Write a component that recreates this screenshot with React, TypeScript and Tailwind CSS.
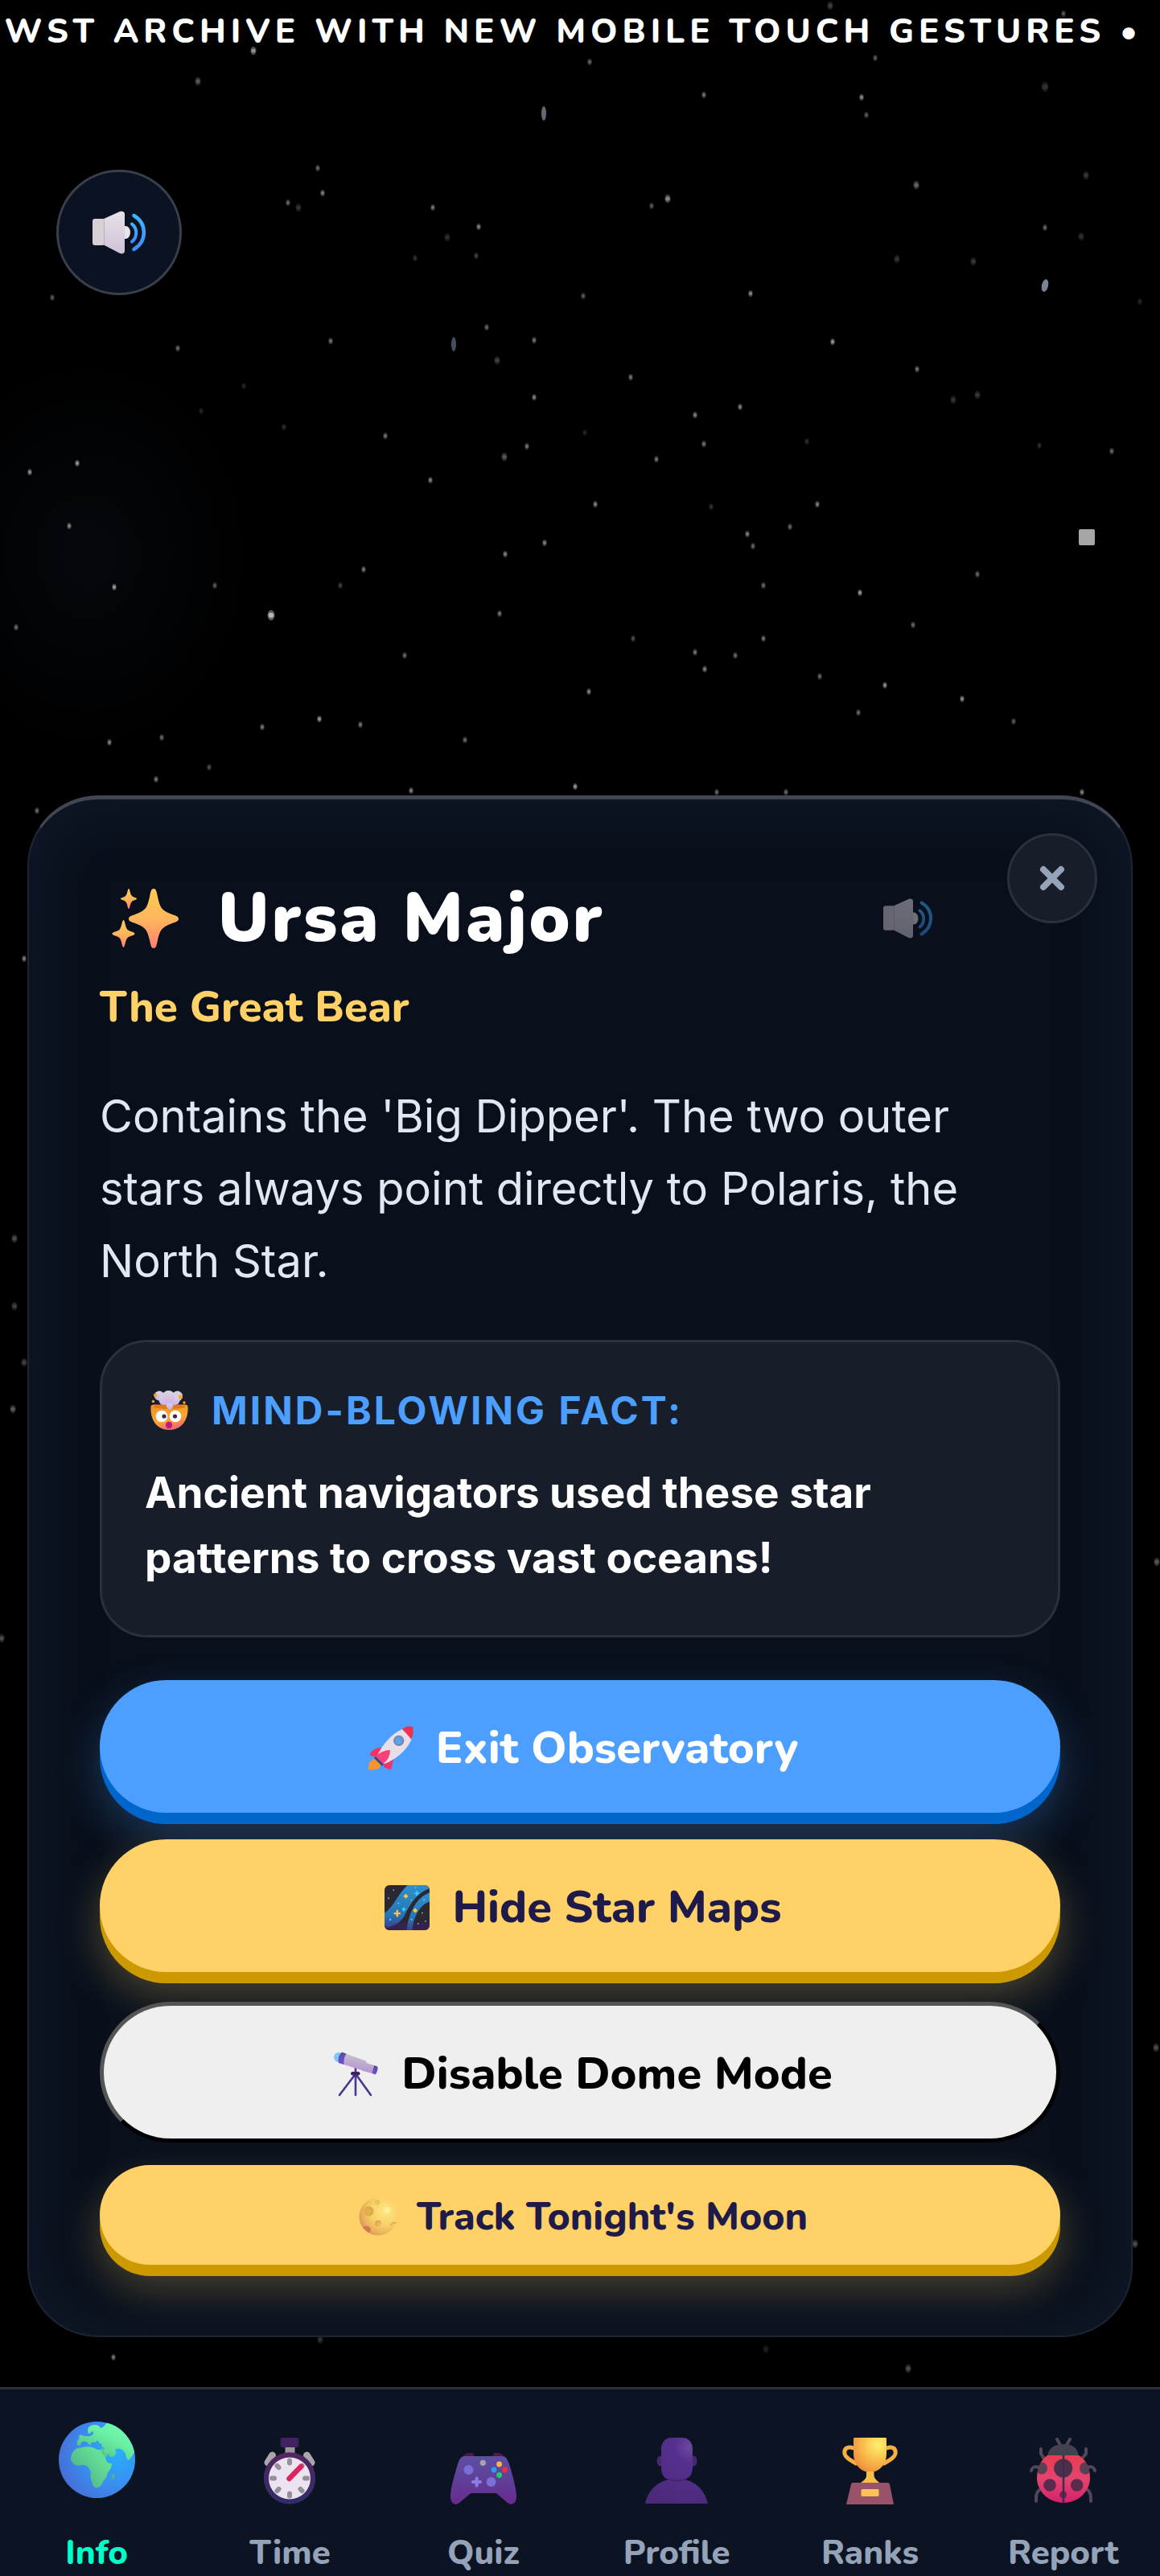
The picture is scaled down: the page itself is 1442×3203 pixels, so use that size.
import type { ReactNode } from "react";

// x, y, radius, opacity
const STARS: [number, number, number, number][] = [
  [315, 63, 4, 0.6], [246, 101, 4, 0.35], [733, 77, 3, 0.4], [875, 118, 3, 0.45], [1071, 121, 3, 0.55],
  [1077, 143, 3, 0.35], [1088, 72, 3, 0.35], [1032, 7, 4, 0.25], [1322, 17, 3, 0.35], [395, 209, 3, 0.4],
  [401, 240, 3, 0.5], [358, 252, 3, 0.4], [371, 258, 4, 0.2], [538, 258, 3, 0.45], [595, 282, 3, 0.5],
  [556, 295, 4, 0.18], [830, 247, 4, 0.55], [810, 256, 3, 0.35], [1139, 230, 4, 0.4], [1350, 218, 4, 0.22],
  [1299, 283, 3, 0.4], [1344, 294, 4, 0.18], [933, 365, 3, 0.55], [725, 368, 3, 0.35], [592, 318, 3, 0.25],
  [516, 321, 3, 0.2], [1115, 322, 4, 0.2], [1210, 325, 4, 0.22], [65, 370, 3, 0.35], [605, 407, 3, 0.4],
  [1417, 375, 3, 0.15], [1299, 108, 5, 0.2], [411, 424, 3, 0.45], [221, 433, 3, 0.4], [664, 423, 3, 0.45],
  [618, 448, 4, 0.25], [1035, 425, 3, 0.6], [784, 469, 3, 0.45], [1140, 459, 3, 0.45], [664, 494, 3, 0.5],
  [920, 506, 3, 0.5], [864, 516, 3, 0.5], [875, 552, 3, 0.45], [479, 542, 3, 0.45], [655, 555, 3, 0.45],
  [627, 568, 4, 0.35], [816, 571, 3, 0.45], [1382, 561, 3, 0.4], [96, 576, 3, 0.6], [37, 587, 3, 0.55],
  [535, 597, 3, 0.5], [740, 627, 3, 0.5], [1016, 627, 3, 0.5], [884, 630, 3, 0.2], [86, 654, 3, 0.5],
  [982, 655, 3, 0.4], [929, 664, 3, 0.5], [936, 679, 3, 0.4], [677, 675, 3, 0.5], [628, 689, 3, 0.5],
  [452, 708, 3, 0.45], [267, 728, 3, 0.35], [142, 730, 3, 0.6], [423, 728, 3, 0.25], [1215, 714, 3, 0.4],
  [949, 728, 3, 0.4], [1069, 737, 3, 0.6], [337, 765, 5, 0.75], [621, 763, 3, 0.45], [20, 780, 3, 0.4],
  [1135, 777, 3, 0.4], [949, 794, 3, 0.45], [787, 794, 3, 0.3], [503, 815, 3, 0.4], [864, 811, 3, 0.45],
  [914, 815, 3, 0.4], [876, 832, 3, 0.5], [1019, 841, 3, 0.4], [1100, 852, 3, 0.55], [732, 860, 3, 0.5],
  [1196, 869, 3, 0.55], [1067, 886, 3, 0.4], [1260, 897, 3, 0.35], [397, 894, 3, 0.6], [326, 904, 3, 0.45],
  [448, 901, 3, 0.45], [201, 917, 3, 0.4], [136, 923, 3, 0.5], [578, 920, 3, 0.4], [260, 954, 3, 0.3],
  [194, 969, 3, 0.45], [715, 978, 3, 0.6], [511, 983, 3, 0.5], [891, 985, 3, 0.4], [977, 985, 3, 0.4],
  [1345, 985, 3, 0.5], [46, 1008, 3, 0.4], [30, 1192, 3, 0.5], [18, 1540, 4, 0.3], [18, 1624, 4, 0.25],
  [30, 1694, 4, 0.25], [16, 1752, 4, 0.35], [1438, 1942, 4, 0.35], [2, 2037, 4, 0.3], [1437, 2546, 4, 0.3],
  [1411, 2790, 4, 0.3], [141, 2931, 3, 0.45], [398, 2909, 4, 0.2], [1129, 2945, 4, 0.3], [952, 2921, 4, 0.12],
  [303, 480, 3, 0.15], [250, 511, 3, 0.15], [353, 531, 3, 0.18], [727, 538, 3, 0.15], [1185, 497, 4, 0.2],
  [1215, 491, 4, 0.22], [1292, 554, 3, 0.18], [1003, 549, 3, 0.18],
];

function StarField() {
  return (
    <svg
      className="pointer-events-none absolute inset-0 h-full w-full"
      viewBox="0 0 1442 3203"
      preserveAspectRatio="xMidYMin slice"
      aria-hidden="true"
    >
      <defs>
        <radialGradient id="haze">
          <stop offset="0" stopColor="#0a121c" stopOpacity="0.45" />
          <stop offset="1" stopColor="#0a121c" stopOpacity="0" />
        </radialGradient>
      </defs>
      <ellipse cx="110" cy="690" rx="190" ry="230" fill="url(#haze)" />
      {STARS.map(([x, y, r, o]) => (
        <g key={`${x}-${y}`} fill="#f4f1ee" opacity={o}>
          <ellipse cx={x} cy={y} rx={r * 0.9} ry={r * 1.3} opacity="0.5" />
          <circle cx={x} cy={y} r={r * 0.65} />
        </g>
      ))}
      <ellipse cx="676" cy="141" rx="3" ry="9" fill="#8a94a8" opacity="0.7" />
      <ellipse cx="564" cy="428" rx="3" ry="9" fill="#5f6f88" opacity="0.7" />
      <ellipse cx="1299" cy="355" rx="4" ry="8" fill="#a9bdd6" opacity="0.7" transform="rotate(12 1299 355)" />
      <rect x="1341" y="658" width="20" height="20" rx="2" fill="#a6a6a6" />
    </svg>
  );
}

function SpeakerIcon({ className }: { className: string }) {
  return (
    <svg className={className} viewBox="6 13 67 54" aria-hidden="true">
      <defs>
        <linearGradient id="spk-cone" x1="0" x2="0" y1="0" y2="1">
          <stop offset="0" stopColor="#e6e1e6" />
          <stop offset="1" stopColor="#cfc3d8" />
        </linearGradient>
        <linearGradient id="spk-wave" x1="0" x2="0" y1="0" y2="1">
          <stop offset="0" stopColor="#3fb5ff" />
          <stop offset="1" stopColor="#3f8cf5" />
        </linearGradient>
      </defs>
      <ellipse cx="47" cy="40" rx="6" ry="8" fill="#e9e4ea" />
      <path d="M19 23.500 L40 14 C43 13 46 14 46 17 V63 C46 66 43 67 40 66 L19 55 Z" fill="url(#spk-cone)" />
      <rect x="6" y="23" width="15" height="33" rx="3" fill="#d6d0d6" />
      <path d="M20.500 24 V55" stroke="#b9b0bf" strokeWidth="1" />
      <path d="M55 29.500 C62 35 62 46 55 51.500" fill="none" stroke="url(#spk-wave)" strokeWidth="4" strokeLinecap="round" />
      <path d="M57.500 19 C74 29 74 51 57.500 61" fill="none" stroke="url(#spk-wave)" strokeWidth="4.500" strokeLinecap="round" />
    </svg>
  );
}

function SparklesIcon() {
  return (
    <svg className="h-[76px] w-[85px]" viewBox="0 0 85 76" aria-hidden="true">
      <defs>
        <linearGradient id="spark" x1="0" x2="0" y1="0" y2="1">
          <stop offset="0" stopColor="#ffcb52" />
          <stop offset="0.5" stopColor="#ffb75c" />
          <stop offset="1" stopColor="#ff7f72" />
        </linearGradient>
      </defs>
      <g fill="url(#spark)">
        <path d="M53 1 C56 1 56.500 4 58 11 C61 25 63 28 76 33 C82 35 84 36 84 38.500 C84 41 82 42 76 44 C63 49 61 52 58 65 C56.500 72 56 75 53 75 C50 75 49.500 72 48 65 C45 52 43 49 30 44 C24 42 22 41 22 38.500 C22 36 24 35 30 33 C43 28 45 25 48 11 C49.500 4 50 1 53 1 Z" />
        <path d="M22 1 C23.500 1 23.500 8 26 10 C28 12 32 12 32 13.500 C32 15 28 15 26 17 C23.500 19 23.500 26 22 26 C20.500 26 20.500 19 18 17 C16 15 12 15 12 13.500 C12 12 16 12 18 10 C20.500 8 20.500 1 22 1 Z" />
        <path d="M15.500 40 C17.500 40 17.500 49 20.500 52 C23 54.500 29.500 54.500 29.500 57 C29.500 59.500 23 59.500 20.500 62 C17.500 65 17.500 74 15.500 74 C13.500 74 13.500 65 10.500 62 C8 59.500 1.500 59.500 1.500 57 C1.500 54.500 8 54.500 10.500 52 C13.500 49 13.500 40 15.500 40 Z" />
      </g>
    </svg>
  );
}

function MindBlownIcon() {
  return (
    <svg className="ml-[6px] h-[50px] w-[49px]" viewBox="11 10 48 50" aria-hidden="true">
      <defs>
        <linearGradient id="face" x1="0.200" x2="0.600" y1="0" y2="1">
          <stop offset="0" stopColor="#f0932c" />
          <stop offset="0.600" stopColor="#fba72e" />
          <stop offset="1" stopColor="#f0607a" />
        </linearGradient>
        <linearGradient id="smoke" x1="0" x2="0" y1="0" y2="1">
          <stop offset="0" stopColor="#dcd8dc" />
          <stop offset="1" stopColor="#cdb3ea" />
        </linearGradient>
      </defs>
      <path d="M12 30 C12 26 20 28 35 28 C50 28 58 26 58 30 C59 47 50 59 35 59 C20 59 11 47 12 30 Z" fill="url(#face)" />
      <ellipse cx="35" cy="30" rx="20" ry="3" fill="#e07a1c" />
      <g fill="url(#smoke)">
        <path d="M29 22 H42 L39 31 C38 34 33 34 32 31 Z" />
        <circle cx="22.500" cy="16.500" r="6" />
        <circle cx="45" cy="17" r="6.500" />
        <circle cx="28" cy="22" r="6" />
        <circle cx="42" cy="22" r="6" />
        <circle cx="34" cy="18" r="8" />
      </g>
      <g fill="#f7a325">
        <circle cx="17.700" cy="15.700" r="2.300" />
        <circle cx="15" cy="23.500" r="1.700" />
        <circle cx="49" cy="18" r="2.500" />
        <circle cx="53.500" cy="25" r="1.700" />
      </g>
      <circle cx="25.500" cy="42" r="7.300" fill="#fff" />
      <circle cx="42.500" cy="42" r="7.300" fill="#fff" />
      <circle cx="28.500" cy="42" r="2.600" fill="#3d2744" />
      <circle cx="42" cy="42" r="2.600" fill="#3d2744" />
      <circle cx="34.500" cy="53" r="4.200" fill="#bb1d80" />
    </svg>
  );
}

function RocketIcon() {
  return (
    <svg className="h-14 w-14" viewBox="50 14 56 56" aria-hidden="true">
      <path d="M58 55 C52 57 49 61 50 69 C52 68 53 68 54 69 C56 68 57 68 59 68 C63 68 65 65 65 61 Z" fill="#f79432" />
      <path d="M66 41 C57 41 53 46 51.500 51 L62 53 Z" fill="#ef3560" />
      <path d="M81 56 C80 62 79 66 77 69 C75 67 72 67 69 65 L70 58 Z" fill="#f0356c" />
      <path d="M92 18 C79 24 68 36 61 51 L70 61 C85 55 97 45 104 30 Z" fill="#e6dfe9" />
      <path d="M92 18 C96 14 101 14 105 15 C106 20 106 25 103 31 C100 26 96 22 92 18 Z" fill="#ee3151" />
      <path d="M77 44 C69 44 63 48 59 52 L68 61 C73 58 77 52 77 44 Z" fill="#f8407a" />
      <path d="M58 53 L68 63" stroke="#3f4576" strokeWidth="3" />
      <circle cx="87.700" cy="32.300" r="6.600" fill="#7d80a0" />
      <circle cx="87.700" cy="32.300" r="4.800" fill="#57a3ee" />
    </svg>
  );
}

function MilkyWayIcon() {
  return (
    <svg className="h-14 w-14" viewBox="0 0 55 55" aria-hidden="true">
      <defs>
        <linearGradient id="band" x1="0" x2="0" y1="0" y2="1">
          <stop offset="0" stopColor="#2f8fcd" />
          <stop offset="0.700" stopColor="#2676b4" />
          <stop offset="1" stopColor="#3c3f93" />
        </linearGradient>
        <clipPath id="frame">
          <rect width="55" height="55" rx="6" />
        </clipPath>
      </defs>
      <g clipPath="url(#frame)">
        <rect width="55" height="55" fill="#2c2832" />
        <rect y="46" width="55" height="9" fill="#3b1f68" opacity="0.600" />
        <path d="M0 34 C10 28 17 10 28 0 H55 V4 C38 10 30 26 24 38 C18 48 10 49 4 52 L0 50 Z" fill="url(#band)" />
        <path d="M27 55 C29 38 36 16 55 9 V20 C44 24 35 38 34 55 Z" fill="url(#band)" />
        <g stroke="#fcc63f" strokeWidth="2.400" strokeLinecap="round">
          <path d="M15.500 31.500 v6 M12.500 34.500 h6" />
          <path d="M26 12 v3 M24.500 13.500 h3" />
          <path d="M37.500 29.500 v3 M36 31 h3" />
        </g>
        <g stroke="#3fd6ff" strokeWidth="1.500" strokeLinecap="round">
          <path d="M39.500 7.500 v5 M37 10 h5" />
          <path d="M23.500 27.500 v4 M21.500 29.500 h4" />
        </g>
        <g fill="#6cc4f5">
          <circle cx="11" cy="6" r="0.900" />
          <circle cx="5" cy="16" r="0.900" />
          <circle cx="17" cy="22" r="1" />
          <circle cx="7" cy="42" r="1.200" />
          <circle cx="33" cy="18" r="0.900" />
          <circle cx="38" cy="3" r="0.900" />
          <circle cx="48" cy="18" r="1" />
          <circle cx="46" cy="34" r="0.900" />
          <circle cx="50" cy="44" r="0.900" />
          <circle cx="41" cy="47" r="0.900" />
          <circle cx="33" cy="42" r="1" />
        </g>
      </g>
    </svg>
  );
}

function TelescopeIcon() {
  return (
    <svg className="h-14 w-14" viewBox="0 0 56 56" aria-hidden="true">
      <defs>
        <linearGradient id="tube" x1="0.300" x2="0.100" y1="0" y2="1">
          <stop offset="0" stopColor="#c9c3cb" />
          <stop offset="1" stopColor="#b18ad8" />
        </linearGradient>
        <linearGradient id="trim" x1="0" x2="0" y1="0" y2="1">
          <stop offset="0" stopColor="#574a9e" />
          <stop offset="1" stopColor="#6a52cf" />
        </linearGradient>
      </defs>
      <path d="M26 29 L7 54 M27 20 V54 M28 29 L46 54" stroke="#4a3590" strokeWidth="2.600" strokeLinecap="round" />
      <circle cx="6" cy="7" r="6" fill="#7cc8fb" />
      <path d="M10 0.700 L39.500 11.500 L41.500 14.500 L50 17 L47.500 27 L36 24 L33 22.500 L6 14 C5 9 6 4 10 0.700 Z" fill="url(#tube)" />
      <path d="M10 0.700 L15.500 2.600 C13 6 12 11 12.500 16 L6 14 C5 9 6 4 10 0.700 Z" fill="url(#trim)" />
      <path d="M50 17 L54 18.500 C55.500 20 53.500 27 51.500 28.500 L47.500 27 Z" fill="url(#trim)" />
      <rect x="21" y="25" width="11.500" height="4.500" rx="2.200" fill="#3f2360" />
    </svg>
  );
}

function MoonIcon() {
  return (
    <svg className="h-12 w-12" viewBox="0 0 48 48" aria-hidden="true">
      <defs>
        <radialGradient id="moon" cx="0.700" cy="0.350" r="0.800">
          <stop offset="0" stopColor="#ffe680" />
          <stop offset="0.500" stopColor="#f8d068" />
          <stop offset="0.800" stopColor="#e6ae58" />
          <stop offset="1" stopColor="#de7f62" />
        </radialGradient>
      </defs>
      <circle cx="24" cy="24" r="23.500" fill="url(#moon)" />
      <circle cx="12.500" cy="17.500" r="6" fill="#d9a848" />
      <circle cx="11.500" cy="18.500" r="4.500" fill="#dfb050" />
      <circle cx="23" cy="6.500" r="3" fill="#e5ba55" />
      <circle cx="22.500" cy="7" r="1.800" fill="#f2cb66" />
      <circle cx="35" cy="16" r="4" fill="#ffef96" />
      <circle cx="24" cy="32.500" r="3.800" fill="#e8a155" />
      <circle cx="25" cy="33.500" r="2.500" fill="#f3b865" />
      <path d="M5 38 C8 34 14 36 15 40 C15 42 14 44 12 44 C9 42 7 40 5 38 Z" fill="#cf7a54" />
      <path d="M40 35 C41 32 44 31 46 32" fill="none" stroke="#cf944c" strokeWidth="1.200" />
    </svg>
  );
}

function GlobeIcon() {
  return (
    <svg className="h-[95px] w-[95px] -translate-y-2" viewBox="0 0 95 95" aria-hidden="true">
      <defs>
        <radialGradient id="sea" cx="0.750" cy="0.400" r="0.750">
          <stop offset="0" stopColor="#27b0fa" />
          <stop offset="0.600" stopColor="#3a8df0" />
          <stop offset="1" stopColor="#4670d8" />
        </radialGradient>
        <linearGradient id="land" x1="1" x2="0.200" y1="0" y2="1">
          <stop offset="0" stopColor="#75ffb4" />
          <stop offset="0.450" stopColor="#6bf0a5" />
          <stop offset="1" stopColor="#4fb87f" />
        </linearGradient>
        <linearGradient id="africa" x1="0.600" x2="0" y1="0.100" y2="0.600">
          <stop offset="0" stopColor="#66df96" />
          <stop offset="1" stopColor="#4fb488" />
        </linearGradient>
        <clipPath id="planet">
          <circle cx="47.500" cy="47.500" r="47.500" />
        </clipPath>
      </defs>
      <g clipPath="url(#planet)">
        <rect width="95" height="95" fill="url(#sea)" />
        <path
          d="M61 0 H95 V38 C91 41 90 47 86 48 C83 46 84 40 81 37 C78 33 72 33 70 35 C73 39 70 43 65 44 C61 43 63 39 60 38 C56 37 58 34 55 32 C52 31 55 28 52 27 C49 29 51 22 47 24 C46 28 42 24 40 27 C42 30 36 29 36 26 C33 24 30 25 28 26 C27 31 23 31 23 27 C22 22 27 23 25 18 C28 15 31 19 34 18 C38 19 43 18 43 13 C41 10 40 16 37 15 C35 12 36 6 40 5 C45 3 50 4 52 8 C56 7 58 4 61 0 Z"
          fill="url(#land)"
        />
        <path
          d="M30 32 C36 30 46 33 48 35 C52 35 55 34 56 38 C58 42 57 46 61 51 C64 53 67 51 66 54 C65 60 61 62 60 66 C60 70 57 71 55 75 C53 79 51 83 46 82 C41 80 42 76 40 71 C38 66 42 63 38 59 C37 55 33 54 29 54 C24 56 19 54 17 51 C14 48 15 44 16 41 C18 37 21 33 24 33 Z"
          fill="url(#africa)"
        />
        <path d="M52 33 L62 36 L60 44 L55 41 Z" fill="url(#africa)" />
        <ellipse cx="67.500" cy="68" rx="1.800" ry="3.500" fill="#4fb487" transform="rotate(15 67.500 68)" />
      </g>
    </svg>
  );
}

const TICK_ANGLES = [0, 45, 90, 135, 180, 225, 270, 315];

function StopwatchIcon() {
  return (
    <svg className="h-[83px] w-[66px]" viewBox="0 0 65 83" aria-hidden="true">
      <defs>
        <linearGradient id="rim" x1="0" x2="0" y1="0" y2="1">
          <stop offset="0" stopColor="#54265f" />
          <stop offset="1" stopColor="#2f2c68" />
        </linearGradient>
      </defs>
      <path d="M11 22 L5.500 31 M54 22 L59.500 31" stroke="#a9a7ab" strokeWidth="9" strokeLinecap="round" />
      <rect x="27" y="10" width="12" height="10" fill="#99979b" />
      <rect x="21" width="23" height="12" rx="3" fill="#41215f" />
      <circle cx="32.500" cy="50.500" r="32.200" fill="url(#rim)" />
      <circle cx="32.500" cy="50.500" r="26" fill="#ebe3ef" />
      {TICK_ANGLES.map((a) => (
        <path
          key={a}
          d="M32.500 28.500 v3"
          stroke="#948f9a"
          strokeWidth="6"
          strokeLinecap="round"
          transform={`rotate(${a} 32.500 50.500)`}
        />
      ))}
      <path d="M32 51 L46.500 36" stroke="#de2360" strokeWidth="6.500" strokeLinecap="round" />
    </svg>
  );
}

function GamepadIcon() {
  return (
    <svg className="h-16 w-[82px]" viewBox="0 0 82 64" aria-hidden="true">
      <defs>
        <linearGradient id="pad" x1="0" x2="0" y1="0" y2="1">
          <stop offset="0" stopColor="#5c4fa3" />
          <stop offset="0.500" stopColor="#5f3f98" />
          <stop offset="1" stopColor="#692a90" />
        </linearGradient>
      </defs>
      <path d="M15 6 C17 1 20 0 24 0 H28 L31 6 Z M67 6 C65 1 62 0 58 0 H54 L51 6 Z" fill="#4c1a4c" />
      <path d="M18 4 H64 C69 4 71 8 73 14 C78 30 82 46 82 54 C82 63 76 66 71 62 L58 51 C57 50 56 50 55 50 H27 C26 50 25 50 24 51 L11 62 C6 66 0 63 0 54 C0 46 4 30 9 14 C11 8 13 4 18 4 Z" fill="url(#pad)" />
      <circle cx="22.500" cy="21" r="6" fill="#7a6fd6" />
      <circle cx="50.500" cy="36" r="6" fill="#7a6fd6" />
      <path d="M32.600 31.500 V40.500 M28 36 H37" stroke="#8a7fe0" strokeWidth="4" strokeLinecap="round" />
      <circle cx="40.300" cy="12.300" r="3.600" fill="#a7a3ab" />
      <circle cx="60.600" cy="14" r="3.400" fill="#fbb63f" />
      <circle cx="54" cy="21" r="3.400" fill="#2d9bf5" />
      <circle cx="67.500" cy="21" r="3.400" fill="#f0303f" />
      <circle cx="60.600" cy="27.500" r="3.400" fill="#23cf68" />
    </svg>
  );
}

function ProfileIcon() {
  return (
    <svg className="h-[83px] w-[78px]" viewBox="0 0 78 83" aria-hidden="true">
      <defs>
        <radialGradient id="bust" cx="0.700" cy="0.150" r="0.900">
          <stop offset="0" stopColor="#6a4a9c" />
          <stop offset="0.250" stopColor="#563090" />
          <stop offset="1" stopColor="#4c2a7a" />
        </radialGradient>
      </defs>
      <ellipse cx="18.500" cy="29" rx="4" ry="6.500" fill="#472870" />
      <ellipse cx="60.500" cy="29" rx="4" ry="6.500" fill="#472870" />
      <path d="M33 0 H46 C54 0 59 6 59 14 V36 C59 46 55 50 49 52 C62 55 74 64 78 82 H0 C4 64 16 55 29 52 C23 50 20 46 20 36 V14 C20 6 25 0 33 0 Z" fill="url(#bust)" />
      <path d="M29 52 C35 54 43 54 49 52" fill="none" stroke="#432468" strokeWidth="1.500" />
    </svg>
  );
}

function TrophyIcon() {
  return (
    <svg className="h-[83px] w-[69px]" viewBox="0 0 69 83" aria-hidden="true">
      <defs>
        <radialGradient id="cup" cx="0.750" cy="0.200" r="0.900">
          <stop offset="0" stopColor="#fff16f" />
          <stop offset="0.500" stopColor="#f9c04b" />
          <stop offset="1" stopColor="#ee8a3c" />
        </radialGradient>
      </defs>
      <g fill="none" stroke="#f8b044" strokeWidth="5" strokeLinecap="round">
        <path d="M14 13 C6 10 2 14 3 20 C4 25 10 28 17 32" />
        <path d="M55 13 C63 10 67 14 66 20 C65 25 59 28 52 32" />
      </g>
      <path d="M14 1 C14 0 15 0 16 0 H53 C54 0 55 0 55 1 V20 C55 34 45 43 34.500 43 S14 34 14 20 Z" fill="url(#cup)" />
      <path d="M30 42 H39.500 V47 C40 52 44 53 47 57 H22 C26 53 30 52 30 47 Z" fill="#fbbe45" />
      <path d="M13 56 H56 C58 56 59 57 59 58 L64 83 H5 L11 58 C11 57 12 56 13 56 Z" fill="#98526a" />
      <rect x="23.500" y="64" width="22" height="9" rx="1.500" fill="#fdc254" />
    </svg>
  );
}

function LadybugIcon() {
  return (
    <svg className="h-[83px] w-[83px]" viewBox="0 0 83 83" aria-hidden="true">
      <defs>
        <linearGradient id="shell" x1="0" x2="0" y1="0" y2="1">
          <stop offset="0" stopColor="#ea3b50" />
          <stop offset="0.500" stopColor="#e2446f" />
          <stop offset="1" stopColor="#d6206c" />
        </linearGradient>
        <clipPath id="shell-clip">
          <path d="M22 22 H61 C70 27 75 38 75 50 C75 67 60 81 42 81 C24 81 9 67 9 50 C9 38 14 27 22 22 Z" />
        </clipPath>
      </defs>
      <g fill="none" stroke="#51475c" strokeWidth="4" strokeLinecap="round" strokeLinejoin="round">
        <path d="M38 9 L34 2 M46 9 L50 2" />
        <path d="M14 14 V20 L18 26 M70 14 V20 L65 26" />
        <path d="M2 41 C3 37 6 35 12 37 M81 41 C80 37 77 35 71 37" />
        <path d="M12 65 C8 68 8 72 8 79 M72 65 C76 68 76 72 76 79" />
      </g>
      <path d="M22 23 C23 13 31 8 42 8 S60 13 61 23 Z" fill="#41414f" />
      <g clipPath="url(#shell-clip)">
        <rect x="9" y="22" width="66" height="59" fill="url(#shell)" />
        <circle cx="41.700" cy="38" r="11.500" fill="#4c2f4c" />
        <ellipse cx="15" cy="38" rx="7" ry="7.500" fill="#5a4054" />
        <ellipse cx="69" cy="38" rx="7" ry="7.500" fill="#5a4054" />
        <circle cx="25" cy="59" r="7.800" fill="#5a2b4e" />
        <circle cx="58.700" cy="59" r="7.800" fill="#5a2b4e" />
        <circle cx="41.700" cy="71" r="4.500" fill="#6c2358" />
        <path d="M42 22 V81" stroke="#3d2c45" strokeWidth="2.500" />
      </g>
    </svg>
  );
}

const NAV_ITEMS: { label: string; icon: ReactNode; active?: boolean }[] = [
  { label: "Info", icon: <GlobeIcon />, active: true },
  { label: "Time", icon: <StopwatchIcon /> },
  { label: "Quiz", icon: <GamepadIcon /> },
  { label: "Profile", icon: <ProfileIcon /> },
  { label: "Ranks", icon: <TrophyIcon /> },
  { label: "Report", icon: <LadybugIcon /> },
];

const PILL = "flex w-full items-center justify-center rounded-full pl-2 font-extrabold";
const LARGE = "gap-7 pt-1 text-[56px]";
const BLUE = "bg-[#4d9fff] text-white shadow-[0_14px_0_#0066cc,0_26px_55px_rgba(77,159,255,0.3)]";
const GOLD = "bg-[#ffd166] text-[#1e1b4b] shadow-[0_14px_0_#cc9a00,0_26px_55px_rgba(255,209,102,0.3)]";

export default function App() {
  return (
    <main className="relative flex min-h-screen flex-col overflow-hidden bg-black font-['Nunito',sans-serif] text-white">
      <StarField />

      <header className="relative overflow-hidden pt-3">
        <div className="-ml-4 flex items-center gap-6 whitespace-nowrap text-[42px] leading-[56px] font-extrabold tracking-[6px]">
          <span>JWST ARCHIVE WITH NEW MOBILE TOUCH GESTURES •</span>
          <svg className="h-[42px] w-[42px] shrink-0" viewBox="0 0 42 42" aria-hidden="true">
            <path d="M0 24 L8 8 L21 1 L36 6 L42 21 L36 36 L21 42 L6 36 Z" fill="#7a5bc7" />
          </svg>
        </div>
      </header>

      <button
        type="button"
        aria-label="Toggle sound"
        className="relative mt-[143px] ml-[70px] flex size-39 items-center justify-center rounded-full border-3 border-[#3a3f4c] bg-[#0b1222]"
      >
        <SpeakerIcon className="h-[54px] w-[67px]" />
      </button>

      <div className="grow" />

      <section className="relative mx-[34px] mb-[62px] rounded-[88px] border-2 border-t-[5px] border-[#1e2433] border-t-[#424552] bg-[#09101c] px-[88px] pt-24 pb-[88px] shadow-[inset_0_0_80px_rgba(24,34,56,0.55)]">
        <button
          type="button"
          aria-label="Close"
          className="absolute top-[42px] right-[42px] flex size-28 items-center justify-center rounded-full border-3 border-[#2b303c] bg-[#171d29]"
        >
          <svg className="size-8" viewBox="0 0 32 32" aria-hidden="true">
            <path d="M5 5 L27 27 M27 5 L5 27" stroke="#94a3b8" strokeWidth="8" strokeLinecap="round" />
          </svg>
        </button>

        <div className="flex items-center justify-between pr-[158px] pl-[14px]">
          <h2 className="flex items-center gap-12 text-[85px] leading-[104px] font-black tracking-[3px]">
            <SparklesIcon />
            <span>Ursa Major</span>
          </h2>
          <button type="button" aria-label="Read aloud" className="opacity-45">
            <SpeakerIcon className="h-[50px] w-[62px]" />
          </button>
        </div>
        <h3 className="mt-[23px] text-[53px] leading-[72px] font-extrabold text-[#ffd166]">The Great Bear</h3>
        <p className="mt-[54px] max-w-[1110px] font-['Inter',sans-serif] text-[56px] leading-[90px] text-[#e2e8f0]">
          Contains the 'Big Dipper'. The two outer stars always point directly to Polaris, the North Star.
        </p>

        <div className="mt-[53px] rounded-[59px] border-3 border-[#2b303b] bg-[#171d29] px-[53px] pt-14 pb-[55px] font-['Inter',sans-serif]">
          <h3 className="flex items-center gap-7 text-[48px] leading-[58px] font-bold tracking-[3px] text-[#4d9fff]">
            <MindBlownIcon />
            <span>MIND-BLOWING FACT:</span>
          </h3>
          <p className="mt-[33px] max-w-[1000px] text-[53px] leading-[81px] font-bold">
            Ancient navigators used these star patterns to cross vast oceans!
          </p>
        </div>

        <div className="mt-[53px]">
          <button type="button" className={`${PILL} ${LARGE} ${BLUE} h-[165px]`}>
            <RocketIcon />
            <span>Exit Observatory</span>
          </button>
          <button type="button" className={`${PILL} ${LARGE} ${GOLD} mt-[33px] h-[165px]`}>
            <MilkyWayIcon />
            <span>Hide Star Maps</span>
          </button>
          <button
            type="button"
            className={`${PILL} ${LARGE} mt-[37px] h-[175px] border-5 border-t-[#555] border-r-black border-b-black border-l-[#555] bg-[#efefef] text-black`}
          >
            <TelescopeIcon />
            <span>Disable Dome Mode</span>
          </button>
          <button type="button" className={`${PILL} ${GOLD} mt-7 h-31 gap-6 pt-1 text-[48px]`}>
            <MoonIcon />
            <span>Track Tonight's Moon</span>
          </button>
        </div>
      </section>

      <nav className="relative grid grid-cols-6 border-t-3 border-[#2a2f3b] bg-[#0c1322]">
        {NAV_ITEMS.map((item) => (
          <a key={item.label} href="#" className="flex flex-col items-center pt-15">
            <span className="flex h-[83px] items-end justify-center">{item.icon}</span>
            <span
              className={`mt-[33px] text-[42px] leading-[56px] font-extrabold ${
                item.active ? "text-[#00ffc8]" : "text-[#94a3b8]"
              }`}
            >
              {item.label}
            </span>
          </a>
        ))}
      </nav>
    </main>
  );
}
